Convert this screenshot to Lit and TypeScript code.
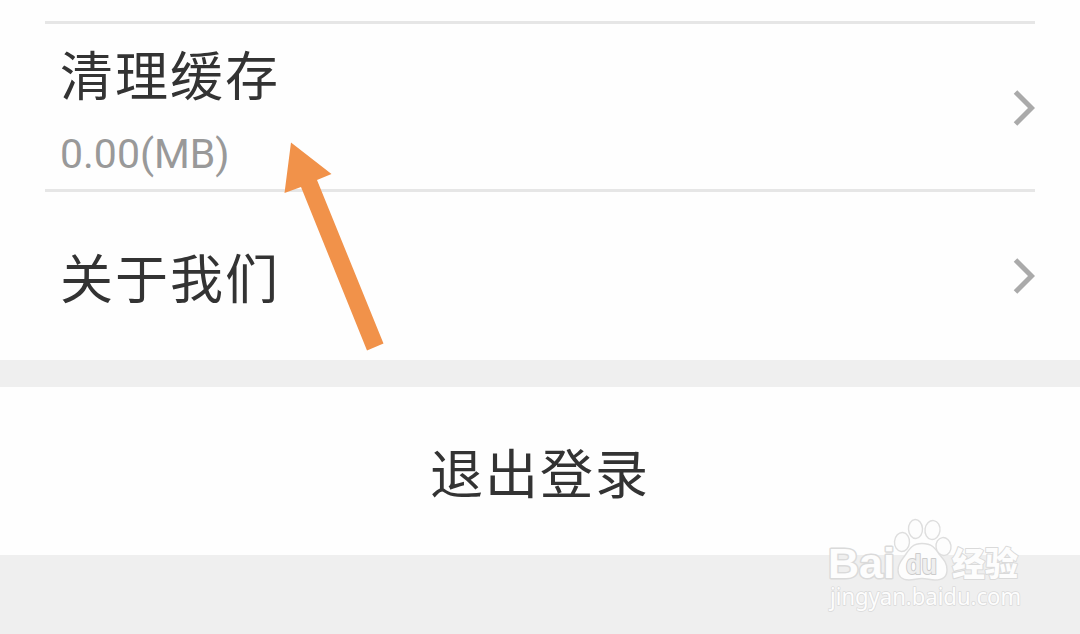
import { html, css, svg, nothing, LitElement } from 'lit';
import { customElement, property } from 'lit/decorators.js';

@customElement('setting-row')
class SettingRow extends LitElement {
  static styles = css`
    :host {
      display: flex;
      align-items: center;
      justify-content: space-between;
      box-sizing: border-box;
      height: 168px;
      margin: 0 45px;
      padding: 2px 0 0 15px;
      border-top: 3px solid #e6e6e6;
    }

    .text {
      display: flex;
      flex-direction: column;
    }

    .label {
      font-size: 53px;
      line-height: 72px;
      letter-spacing: 2px;
      color: #333;
    }

    .value {
      margin-top: 20px;
      font-family: Roboto, sans-serif;
      font-size: 41px;
      line-height: 50px;
      color: #999;
    }

    .chevron {
      display: block;
      width: 24px;
      height: 40px;
      fill: none;
      stroke: #aaa;
      stroke-width: 5;
    }
  `;

  @property() label = '';
  @property() value = '';

  render() {
    return html`
      <div class="text">
        <div class="label">${this.label}</div>
        ${this.value ? html`<div class="value">${this.value}</div>` : nothing}
      </div>
      <svg class="chevron" viewBox="0 0 24 40">
        <path d="M4.5 4 L20.5 20 L4.5 36" />
      </svg>
    `;
  }
}

@customElement('baidu-watermark')
class BaiduWatermark extends LitElement {
  static styles = css`
    :host {
      display: block;
    }

    svg {
      display: block;
    }

    .shape {
      fill: #fdfdfd;
      stroke: #dedede;
      stroke-width: 1.4;
    }

    text {
      fill: #fdfdfd;
      stroke: #dadada;
      stroke-width: 2;
      stroke-linejoin: round;
      paint-order: stroke;
    }

    .brand {
      font: bold 43px 'Liberation Sans', sans-serif;
      stroke-width: 3;
    }

    .du {
      font: bold 27px 'Liberation Sans', sans-serif;
      fill: #efefef;
      stroke: #ccc;
    }

    .cn {
      font: 900 33px 'Noto Sans CJK SC', sans-serif;
    }

    .url {
      font: 23px 'Noto Sans', sans-serif;
      stroke-width: 1.5;
    }
  `;

  render() {
    const toes = [
      [82, 32, 7.5, 9.5, 5],
      [95.5, 19, 7, 9.5, -3],
      [112.5, 20, 7.5, 9.5, 8],
      [123.5, 36.5, 7.5, 9, -8],
    ];
    return html`
      <svg width="220" height="110" viewBox="0 0 220 110">
        <text class="brand" x="8" y="68" textLength="67" lengthAdjust="spacingAndGlyphs">Bai</text>
        ${toes.map(([x, y, rx, ry, a]) => svg`
          <ellipse class="shape" cx=${x} cy=${y} rx=${rx} ry=${ry} transform="rotate(${a} ${x} ${y})" />
        `)}
        <path class="shape" d="M102 33.5 C112 33.5 115 38 119 44 C123 49 127 52 127 60 C127 67 122 70 115 70 C110 70 107 68.5 102 68.5 C97 68.5 94 70 89 70 C82 70 78 66 78 60 C78 53 82 50 86 44 C90 38 93 33.5 102 33.5Z" />
        <text class="du" x="86" y="63.5" textLength="31" lengthAdjust="spacingAndGlyphs">du</text>
        <text class="cn" x="132" y="66" textLength="66" lengthAdjust="spacingAndGlyphs">经验</text>
        <text class="url" x="10" y="94.5" textLength="191" lengthAdjust="spacingAndGlyphs">jingyan.baidu.com</text>
      </svg>
    `;
  }
}

@customElement('app-root')
class AppRoot extends LitElement {
  static styles = css`
    :host {
      display: block;
      position: relative;
      box-sizing: border-box;
      width: 1080px;
      height: 634px;
      overflow: hidden;
      background: #efefef;
      font-family: 'Noto Sans CJK SC', sans-serif;
    }

    .group {
      box-sizing: border-box;
      height: 360px;
      padding-top: 21px;
      background: #fefefe;
    }

    .logout {
      display: flex;
      align-items: center;
      justify-content: center;
      height: 168px;
      margin-top: 27px;
      background: #fefefe;
      font-size: 53px;
      line-height: 72px;
      letter-spacing: 2px;
      color: #333;
    }

    .arrow {
      position: absolute;
      left: 280px;
      top: 138px;
      fill: #f1924a;
    }

    .watermark {
      position: absolute;
      left: 820px;
      top: 510px;
    }
  `;

  render() {
    return html`
      <div class="group">
        <setting-row label="清理缓存" value="0.00(MB)"></setting-row>
        <setting-row label="关于我们"></setting-row>
      </div>
      <div class="logout">退出登录</div>
      <svg class="arrow" width="108" height="216" viewBox="280 138 108 216">
        <path d="M291 142.5 L331.5 174 L317 180 L383.5 343.5 L367 350.5 L301 187 L284.5 193Z" />
      </svg>
      <baidu-watermark class="watermark"></baidu-watermark>
    `;
  }
}
